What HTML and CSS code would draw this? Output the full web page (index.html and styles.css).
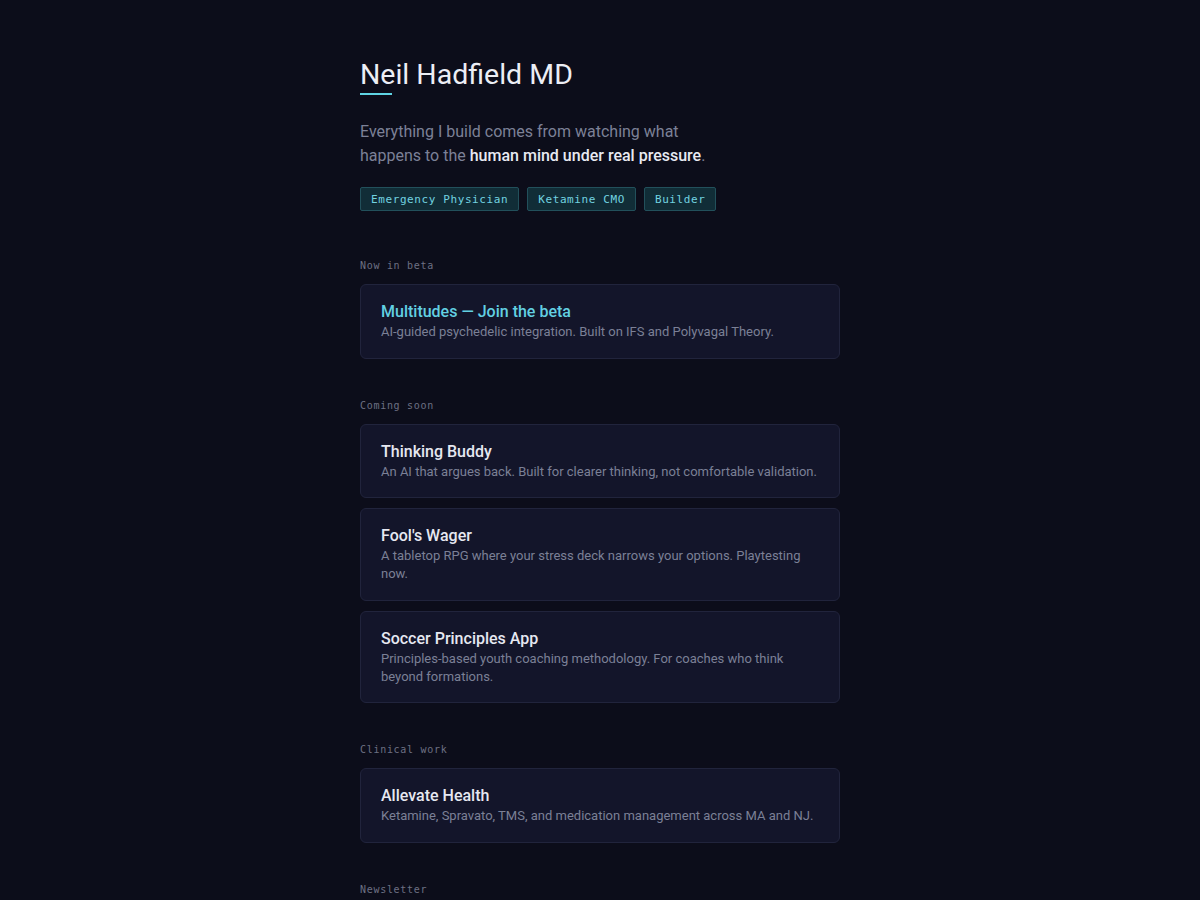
FILE: index.html
```html
<!DOCTYPE html>
<html lang="en">
<head>
<meta charset="utf-8">
<title>Neil Hadfield MD</title>
<link rel="stylesheet" href="styles.css">
</head>
<body>
<main class="page">
  <header class="intro">
    <h1 class="name">Neil Hadfield MD</h1>
    <p class="lede">Everything I build comes from watching what happens to the <strong>human mind under real pressure</strong>.</p>
    <ul class="tags">
      <li class="tag">Emergency Physician</li>
      <li class="tag">Ketamine CMO</li>
      <li class="tag">Builder</li>
    </ul>
  </header>

  <section class="section">
    <h2 class="label">Now in beta</h2>
    <a class="card" href="#">
      <h3 class="card-title accent">Multitudes — Join the beta</h3>
      <p class="card-desc">AI-guided psychedelic integration. Built on IFS and Polyvagal Theory.</p>
    </a>
  </section>

  <section class="section">
    <h2 class="label">Coming soon</h2>
    <div class="card">
      <h3 class="card-title">Thinking Buddy</h3>
      <p class="card-desc">An AI that argues back. Built for clearer thinking, not comfortable validation.</p>
    </div>
    <div class="card">
      <h3 class="card-title">Fool's Wager</h3>
      <p class="card-desc">A tabletop RPG where your stress deck narrows your options. Playtesting now.</p>
    </div>
    <div class="card">
      <h3 class="card-title">Soccer Principles App</h3>
      <p class="card-desc">Principles-based youth coaching methodology. For coaches who think beyond formations.</p>
    </div>
  </section>

  <section class="section">
    <h2 class="label">Clinical work</h2>
    <div class="card">
      <h3 class="card-title">Allevate Health</h3>
      <p class="card-desc">Ketamine, Spravato, TMS, and medication management across MA and NJ.</p>
    </div>
  </section>

  <section class="section">
    <h2 class="label">Newsletter</h2>
  </section>
</main>
</body>
</html>
```

FILE: styles.css
```css
* { box-sizing: border-box; }
html, body {
  margin: 0;
  padding: 0;
  background: #0c0d1a;
}
body {
  font-family: "Roboto", "Inter", "Noto Sans", sans-serif;
  color: #e6e8f0;
}
.page {
  width: 480px;
  margin: 0 auto;
  padding: 56px 0 80px;
}
.intro {
  margin-bottom: 48px;
}
.name {
  margin: 0;
  font-size: 28.5px;
  font-weight: 400;
  line-height: 38px;
  color: #eceef5;
}
.name::after {
  content: "";
  display: block;
  width: 32px;
  height: 2px;
  background: #5fd3e3;
  margin-top: -1px;
}
.lede {
  margin: 25px 0 0;
  max-width: 360px;
  font-size: 16px;
  line-height: 24px;
  color: #7c8197;
}
.lede strong {
  font-weight: 500;
  color: #e8eaf2;
}
.tags {
  list-style: none;
  margin: 19px 0 0;
  padding: 0;
  display: flex;
  gap: 8px;
}
.tag {
  height: 24px;
  display: flex;
  align-items: center;
  padding: 0 10px;
  font-family: "DejaVu Sans Mono", "Liberation Mono", monospace;
  font-size: 11px;
  letter-spacing: 0.6px;
  color: #72d3e0;
  background: #112d37;
  border: 1px solid #22505b;
  border-radius: 2px;
}
.section {
  display: flex;
  flex-direction: column;
  gap: 10px;
  margin-bottom: 40px;
}
.label {
  margin: 0 0 1px;
  font-family: "DejaVu Sans Mono", "Liberation Mono", monospace;
  font-size: 10px;
  font-weight: 400;
  line-height: 14px;
  letter-spacing: 0.7px;
  color: #6c7083;
}
.card {
  display: block;
  text-decoration: none;
  background: #13152a;
  border: 1px solid #21243c;
  border-radius: 6px;
  padding: 16px 20px 16.5px;
}
.card-title {
  margin: 0;
  font-size: 16px;
  font-weight: 500;
  line-height: 22px;
  color: #e6e8f1;
}
.card-title.accent {
  color: #62d0e2;
}
.card-desc {
  margin: 0;
  font-size: 13px;
  line-height: 18px;
  color: #7b8096;
}
```
